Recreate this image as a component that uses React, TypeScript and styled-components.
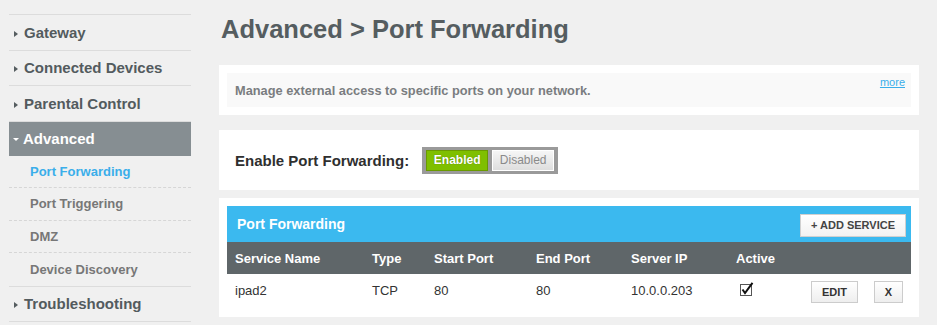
import styled, { createGlobalStyle } from "styled-components";

const GlobalStyle = createGlobalStyle`
	body {
		margin: 0;
		background: #f0f0f0;
		font-family: "Liberation Sans", Arial, sans-serif;
	}
`;

const topItems = ["Gateway", "Connected Devices", "Parental Control"];
const subItems = ["Port Forwarding", "Port Triggering", "DMZ", "Device Discovery"];

const columns = ["Service Name", "Type", "Start Port", "End Port", "Server IP", "Active", ""];

function App() {
	return (
		<Page>
			<GlobalStyle />
			<Sidebar>
				{topItems.map((label) => (
					<NavItem key={label}>
						<Arrow />
						{label}
					</NavItem>
				))}
				<NavItem $active>
					<DownArrow />
					Advanced
				</NavItem>
				<SubMenu>
					{subItems.map((label, i) => (
						<SubItem key={label} $current={i === 0}>
							{label}
						</SubItem>
					))}
				</SubMenu>
				<NavItem>
					<Arrow />
					Troubleshooting
				</NavItem>
			</Sidebar>
			<Main>
				<Title>Advanced &gt; Port Forwarding</Title>
				<Card>
					<InfoBox>
						<InfoText>Manage external access to specific ports on your network.</InfoText>
						<MoreLink href="#">more</MoreLink>
					</InfoBox>
				</Card>
				<Card>
					<EnableRow>
						<EnableLabel>Enable Port Forwarding:</EnableLabel>
						<Toggle>
							<ToggleButton $on>Enabled</ToggleButton>
							<ToggleButton>Disabled</ToggleButton>
						</Toggle>
					</EnableRow>
				</Card>
				<Card $tight>
					<TableHead>
						<TableTitle>Port Forwarding</TableTitle>
						<AddButton>+ ADD SERVICE</AddButton>
					</TableHead>
					<HeaderRow>
						{columns.map((c, i) => (
							<Cell key={i}>{c}</Cell>
						))}
					</HeaderRow>
					<DataRow>
						<Cell>ipad2</Cell>
						<Cell>TCP</Cell>
						<Cell>80</Cell>
						<Cell>80</Cell>
						<Cell>10.0.0.203</Cell>
						<Cell>
							<CheckIcon width="14" height="14" viewBox="0 0 14 14">
								<rect x="0.5" y="2.5" width="11" height="11" fill="#fff" stroke="#555" />
								<path d="M2.5 7.5 L5 11 L12.5 0.8" fill="none" stroke="#111" strokeWidth="2" />
							</CheckIcon>
						</Cell>
						<Actions>
							<SmallButton $wide>EDIT</SmallButton>
							<SmallButton>X</SmallButton>
						</Actions>
					</DataRow>
				</Card>
			</Main>
		</Page>
	);
}

const Page = styled.div`
	display: flex;
	align-items: flex-start;
	gap: 28px;
	padding-left: 9px;
	width: 937px;
	height: 325px;
	box-sizing: border-box;
	overflow: hidden;
`;

const Sidebar = styled.nav`
	width: 182px;
	flex-shrink: 0;
	margin-top: 14px;
	border-top: 1px solid #dcdcdc;
`;

const NavItem = styled.div<{ $active?: boolean }>`
	display: flex;
	align-items: center;
	box-sizing: border-box;
	height: ${(p) => (p.$active ? "34px" : "35.5px")};
	padding-left: 4px;
	font-size: 15px;
	font-weight: bold;
	color: ${(p) => (p.$active ? "#fff" : "#535b5e")};
	background: ${(p) => (p.$active ? "#868e92" : "transparent")};
	border-bottom: ${(p) => (p.$active ? "none" : "1px solid #dcdcdc")};
`;

const Arrow = styled.span`
	width: 0;
	height: 0;
	margin: 3px 6px 0 1px;
	border-top: 3px solid transparent;
	border-bottom: 3px solid transparent;
	border-left: 4px solid #555d60;
`;

const DownArrow = styled.span`
	width: 0;
	height: 0;
	margin: 2px 4px 0 0;
	border-left: 3px solid transparent;
	border-right: 3px solid transparent;
	border-top: 3px solid #fff;
`;

const SubMenu = styled.div`
	border-bottom: 1px solid #dcdcdc;
`;

const SubItem = styled.div<{ $current?: boolean }>`
	display: flex;
	align-items: center;
	box-sizing: border-box;
	height: 32.5px;
	padding-left: 21px;
	font-size: 13px;
	font-weight: bold;
	color: ${(p) => (p.$current ? "#3aaeea" : "#777")};
	border-bottom: 1px dashed #d6d6d6;

	&:last-child {
		border-bottom: none;
	}
`;

const Main = styled.main`
	width: 700px;
	display: flex;
	flex-direction: column;
	gap: 15px;
`;

const Title = styled.h1`
	margin: 14px 0 0 2px;
	height: 36px;
	font-size: 25.5px;
	font-weight: bold;
	color: #555d60;
	line-height: 31px;
`;

const Card = styled.section<{ $tight?: boolean }>`
	background: #fff;
	padding: ${(p) => (p.$tight ? "8px 8px 11px" : "8px")};
	margin-top: ${(p) => (p.$tight ? "-7px" : "0")};
`;

const InfoBox = styled.div`
	display: flex;
	justify-content: space-between;
	align-items: flex-start;
	height: 34px;
	background: #f9f9f9;
	padding: 0 6px 0 8px;
`;

const InfoText = styled.p`
	margin: 0;
	align-self: center;
	font-size: 12.8px;
	font-weight: bold;
	color: #7a7d80;
`;

const MoreLink = styled.a`
	margin-top: 3px;
	font-size: 11px;
	color: #3aaeea;
`;

const EnableRow = styled.div`
	display: flex;
	align-items: center;
	height: 44px;
	padding-left: 8px;
`;

const EnableLabel = styled.span`
	font-size: 15px;
	font-weight: bold;
	color: #2f2f2f;
	margin-right: 13px;
`;

const Toggle = styled.div`
	display: flex;
	gap: 4px;
	padding: 3px 4px;
	background: #9a9a9a;
`;

const ToggleButton = styled.button<{ $on?: boolean }>`
	width: 62px;
	height: 21px;
	padding: 0;
	font-family: inherit;
	font-size: 12px;
	font-weight: ${(p) => (p.$on ? "bold" : "normal")};
	color: ${(p) => (p.$on ? "#fff" : "#8a8a8a")};
	background: ${(p) =>
		p.$on ? "#7fbf00" : "linear-gradient(#f6f6f6, #dedede)"};
	border: 1px solid ${(p) => (p.$on ? "#6a9a00" : "#fff")};
	text-shadow: ${(p) => (p.$on ? "0 0 1px #4d7000" : "none")};
`;

const TableHead = styled.div`
	display: flex;
	justify-content: space-between;
	align-items: center;
	height: 36px;
	padding: 0 5px 0 10px;
	background: #3bb9ef;
`;

const TableTitle = styled.h2`
	margin: 0;
	font-size: 14px;
	font-weight: bold;
	color: #fff;
`;

const AddButton = styled.button`
	width: 106px;
	height: 23px;
	margin-top: 2px;
	padding: 0;
	font-family: inherit;
	font-size: 11px;
	font-weight: bold;
	color: #444;
	background: linear-gradient(#fff, #f2f2f2);
	border: 1px solid #d0d0d0;
`;

const Row = styled.div`
	display: grid;
	grid-template-columns: 137px 62px 102px 95px 105px 75px 1fr;
	align-items: center;
	height: 32px;
`;

const HeaderRow = styled(Row)`
	background: #5f6669;
	color: #fff;
	font-size: 13px;
	font-weight: bold;
`;

const DataRow = styled(Row)`
	color: #333;
	font-size: 13px;
`;

const Cell = styled.div`
	padding-left: 8px;
	display: flex;
	align-items: center;
`;

const CheckIcon = styled.svg`
	margin-left: 4px;
	margin-top: -2px;
`;

const Actions = styled.div`
	display: flex;
	gap: 16px;
	padding-left: 8px;
	margin-top: 4px;
`;

const SmallButton = styled.button<{ $wide?: boolean }>`
	width: ${(p) => (p.$wide ? "47px" : "29px")};
	height: 22px;
	padding: 0;
	font-family: inherit;
	font-size: 11px;
	font-weight: bold;
	color: #333;
	background: linear-gradient(#fff, #eee);
	border: 1px solid #ccc;
`;

export default App;
